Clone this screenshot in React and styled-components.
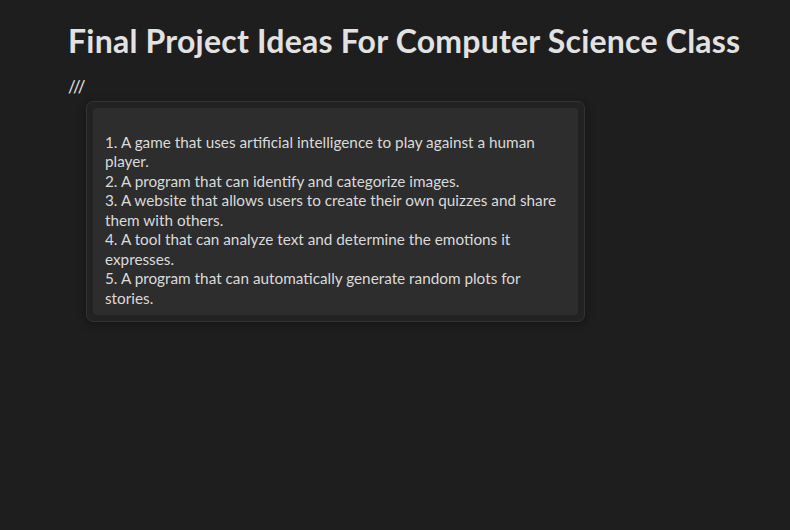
import React from "react";
import styled, { createGlobalStyle } from "styled-components";

const GlobalStyle = createGlobalStyle`
  html, body {
    margin: 0;
    background: #1e1e1e;
    color: #dcdcdc;
    font-family: "Lato", "Open Sans", sans-serif;
  }
`;

const ideas = [
  "1. A game that uses artificial intelligence to play against a human player.",
  "2. A program that can identify and categorize images.",
  "3. A website that allows users to create their own quizzes and share them with others.",
  "4. A tool that can analyze text and determine the emotions it expresses.",
  "5. A program that can automatically generate random plots for stories.",
];

const App = () => {
  return (
    <Page>
      <GlobalStyle />
      <Title>Final Project Ideas For Computer Science Class</Title>
      <Marker>///</Marker>
      <Card>
        <Output>
          <Blank />
          {ideas.map(line => (
            <Line key={line}>{line}</Line>
          ))}
        </Output>
      </Card>
    </Page>
  );
};

export default App;

const Page = styled.div`
  width: 790px;
  height: 530px;
  box-sizing: border-box;
  padding: 22px 0 0 68px;
  display: flex;
  flex-direction: column;
  align-items: flex-start;
`;

const Title = styled.h1`
  margin: 0;
  font-size: 32px;
  font-weight: 700;
  line-height: 38px;
  color: #e2e2e2;
  letter-spacing: 0.22px;
`;

const Marker = styled.div`
  margin-top: 17px;
  font-size: 17px;
  line-height: 20px;
  letter-spacing: 1px;
  color: #e6e6e6;
`;

const Card = styled.div`
  margin: 4px 0 0 18px;
  width: 499px;
  box-sizing: border-box;
  padding: 6px;
  background: #222222;
  border: 1px solid #333333;
  border-radius: 7px;
  box-shadow: 0 2px 8px rgba(0, 0, 0, 0.35);
`;

const Output = styled.div`
  background: #2d2d2d;
  border-radius: 4px;
  padding: 5px 12px 7px;
  font-size: 15.3px;
  line-height: 19.5px;
  color: #dadada;
`;

const Blank = styled.div`
  height: 19.5px;
`;

const Line = styled.div``;
